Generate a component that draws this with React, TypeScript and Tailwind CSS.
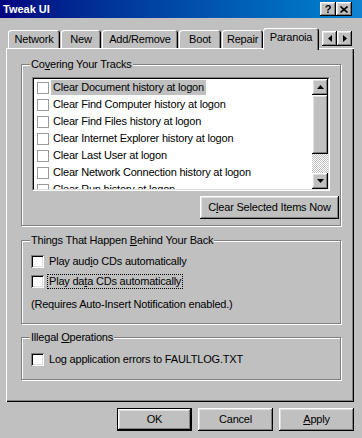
import React from 'react';

const raised =
  'bg-[#c0c0c0] shadow-[inset_-1px_-1px_0_#000,inset_1px_1px_0_#fff,inset_-2px_-2px_0_#808080,inset_2px_2px_0_#dfdfdf]';
const etched = 'border border-[#808080] shadow-[inset_1px_1px_0_#fff,1px_1px_0_#fff]';

const tracks = [
  'Clear Document history at logon',
  'Clear Find Computer history at logon',
  'Clear Find Files history at logon',
  'Clear Internet Explorer history at logon',
  'Clear Last User at logon',
  'Clear Network Connection history at logon',
  'Clear Run history at logon',
];

const Tab = ({ label, w }: { label: string; w: string }) => (
  <div
    className={`${w} h-[18px] flex items-center justify-center rounded-t-[3px] shadow-[inset_1px_1px_0_#fff,inset_-1px_0_0_#000,inset_-2px_0_0_#808080]`}
  >
    {label}
  </div>
);

const Triangle = ({ dir }: { dir: 'up' | 'down' | 'left' | 'right' }) => {
  const pts = {
    up: '3.5,0 7,4 0,4',
    down: '0,0 7,0 3.5,4',
    left: '4,0 4,7 0,3.5',
    right: '0,0 4,3.5 0,7',
  }[dir];
  const vertical = dir === 'up' || dir === 'down';
  return (
    <svg width={vertical ? 7 : 4} height={vertical ? 4 : 7} viewBox={vertical ? '0 0 7 4' : '0 0 4 7'}>
      <polygon points={pts} fill="#000" />
    </svg>
  );
};

const Check = () => (
  <div className="w-[13px] h-[13px] shrink-0 bg-white shadow-[inset_1px_1px_0_#808080,inset_-1px_-1px_0_#fff,inset_2px_2px_0_#000,inset_-2px_-2px_0_#dfdfdf]" />
);

const Group = ({ title, className, children }: { title: React.ReactNode; className: string; children: React.ReactNode }) => (
  <div className={`relative w-[320px] ${etched} ${className}`}>
    <span className="absolute left-[8px] top-[-7px] px-[1px] bg-[#c0c0c0] leading-[13px]">{title}</span>
    {children}
  </div>
);

export default function App() {
  return (
    <div className="w-[362px] h-[438px] bg-[#c0c0c0] text-black text-[11px] leading-[13px] tracking-[-0.2px] font-['Liberation_Sans',Arial,sans-serif] overflow-hidden flex flex-col">
      {/* caption */}
      <div className="h-[18px] shrink-0 flex items-center justify-between pl-[3px] pr-[10px] bg-gradient-to-r from-[#000080] to-[#1084d0]">
        <span className="text-white font-bold text-[11px] tracking-normal">Tweak UI</span>
        <div className="flex">
          <div className={`w-[16px] h-[14px] flex items-center justify-center font-bold text-[11px] ${raised}`}>?</div>
          <div className={`w-[16px] h-[14px] flex items-center justify-center ${raised}`}>
            <svg width="8" height="7" viewBox="0 0 8 7">
              <path d="M0.5 0.5 L7.5 6.5 M7.5 0.5 L0.5 6.5" stroke="#000" strokeWidth="1.6" />
            </svg>
          </div>
        </div>
      </div>

      {/* tabs */}
      <div className="mt-[10px] h-[20px] shrink-0 flex items-end pl-[8px] relative z-10">
        <Tab label="Network" w="w-[52px]" />
        <div className="w-[1px]" />
        <Tab label="New" w="w-[40px]" />
        <div className="w-[1px]" />
        <Tab label="Add/Remove" w="w-[76px]" />
        <div className="w-[1px]" />
        <Tab label="Boot" w="w-[42px]" />
        <div className="w-[1px]" />
        <Tab label="Repair" w="w-[41px]" />
        <div className="w-[56px] h-[22px] mb-[-2px] pb-[4px] flex items-center justify-center bg-[#c0c0c0] rounded-t-[3px] shadow-[inset_1px_1px_0_#fff,inset_-1px_0_0_#000,inset_-2px_0_0_#808080]">
          Paranoia
        </div>
        <div className="ml-[3px] mb-[2px] flex">
          <div className={`w-[15px] h-[15px] flex items-center justify-center ${raised}`}>
            <Triangle dir="left" />
          </div>
          <div className={`w-[15px] h-[15px] flex items-center justify-center ${raised}`}>
            <Triangle dir="right" />
          </div>
        </div>
      </div>

      {/* panel */}
      <div className="ml-[6px] w-[348px] h-[354px] shrink-0 pl-[15px] pt-[16px] flex flex-col shadow-[inset_1px_1px_0_#fff,inset_-1px_-1px_0_#000,inset_-2px_-2px_0_#808080]">
        <Group
          title={<>Co<u>v</u>ering Your Tracks</>}
          className="h-[162px] pl-[10px] pt-[12px] flex flex-col"
        >
          <div className="w-[298px] h-[114px] border border-t-[#808080] border-l-[#808080] border-b-white border-r-white">
            <div className="w-full h-full border border-t-black border-l-black border-b-[#dfdfdf] border-r-[#dfdfdf] bg-white flex overflow-hidden">
              <div className="flex-1 flex flex-col">
                {tracks.map((t, i) => (
                  <div key={t} className="h-[17px] shrink-0 flex items-center pl-[3px]">
                    <div className="w-[12px] h-[12px] border border-[#9a9a9a] bg-white shrink-0" />
                    <span className={`ml-[2px] px-[2px] h-[15px] leading-[15px] whitespace-nowrap ${i === 0 ? 'bg-[#c0c0c0]' : ''}`}>
                      {t}
                    </span>
                  </div>
                ))}
              </div>
              <div className="w-[16px] flex flex-col">
                <div className={`h-[16px] flex items-center justify-center ${raised}`}>
                  <Triangle dir="up" />
                </div>
                <div className={`h-[59px] ${raised}`} />
                <div className="flex-1 bg-[repeating-conic-gradient(#fff_0_25%,#c0c0c0_0_50%)] bg-[length:2px_2px]" />
                <div className={`h-[16px] flex items-center justify-center ${raised}`}>
                  <Triangle dir="down" />
                </div>
              </div>
            </div>
          </div>
          <div className={`self-end mr-[1px] mt-[5px] w-[139px] h-[23px] flex items-center justify-center ${raised}`}>
            C<u>l</u>ear Selected Items Now
          </div>
        </Group>

        <Group
          title={<>Things That Happen <u>B</u>ehind Your Back</>}
          className="mt-[14px] h-[84px] pl-[9px] pt-[14px] flex flex-col"
        >
          <div className="h-[13px] flex items-center gap-[4px]">
            <Check />
            <span className="px-[1px]">Play aud<u>i</u>o CDs automatically</span>
          </div>
          <div className="mt-[7px] h-[13px] flex items-center gap-[4px]">
            <Check />
            <span className="px-[1px] outline outline-1 outline-dotted outline-black">Play da<u>t</u>a CDs automatically</span>
          </div>
          <div className="mt-[10px]">(Requires Auto-Insert Notification enabled.)</div>
        </Group>

        <Group title={<>Illegal <u>O</u>perations</>} className="mt-[13px] h-[43px] pl-[9px] pt-[15px] flex flex-col">
          <div className="h-[13px] flex items-center gap-[4px]">
            <Check />
            <span className="px-[1px]">Log application errors to FAULTLOG.TXT</span>
          </div>
        </Group>
      </div>

      {/* dialog buttons */}
      <div className="mt-[6px] flex justify-end gap-[6px] pr-[8px]">
        <div className={`w-[75px] h-[23px] flex items-center justify-center border border-black ${raised}`}>OK</div>
        <div className={`w-[75px] h-[23px] flex items-center justify-center ${raised}`}>Cancel</div>
        <div className={`w-[75px] h-[23px] flex items-center justify-center ${raised}`}>
          <u>A</u>pply
        </div>
      </div>
    </div>
  );
}
